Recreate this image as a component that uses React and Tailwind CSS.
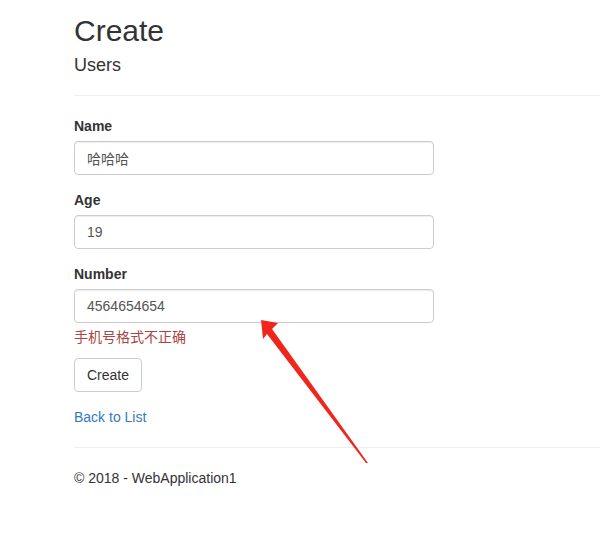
export default function App() {
  const fields = [
    { label: "Name", value: "哈哈哈" },
    { label: "Age", value: "19" },
    { label: "Number", value: "4564654654", error: "手机号格式不正确" },
  ];

  return (
    <div
      className="relative min-h-screen bg-white text-[14px] leading-[20px] text-[#333]"
      style={{ fontFamily: '"Liberation Sans", "Noto Sans CJK SC", sans-serif' }}
    >
      <div className="pl-[74px]">
        <h2 className="pt-[14px] text-[30px] leading-[33px] font-normal">Create</h2>
        <h4 className="mt-[8px] text-[18px] leading-[20px] font-normal">Users</h4>
        <hr className="mt-[20px] border-t border-[#eee]" />

        <div className="mt-[20px] w-[360px]">
          {fields.map((f) => (
            <div key={f.label} className="mb-[15px]">
              <label className="block mb-[5px] font-bold">{f.label}</label>
              <input
                readOnly
                value={f.value}
                className="block w-full h-[34px] px-[12px] py-[6px] border border-[#ccc] rounded-[4px] text-[#555] shadow-[inset_0_1px_1px_rgba(0,0,0,0.075)] outline-none"
              />
              {f.error && (
                <span className="block mt-[4px] text-[#a94442]">{f.error}</span>
              )}
            </div>
          ))}
        </div>

        <button className="-mt-[4px] h-[34px] px-[12px] border border-[#ccc] rounded-[4px] bg-white text-[#333]">
          Create
        </button>

        <div className="mt-[15px]">
          <a href="#" className="text-[#337ab7]">Back to List</a>
        </div>

        <hr className="mt-[20px] border-t border-[#eee]" />
        <footer className="mt-[20px]">© 2018 - WebApplication1</footer>
      </div>

      <svg className="absolute left-0 top-0 pointer-events-none" width="600" height="550">
        <polygon
          points="261,320 278,323 272,329 368,463 366,463 267,334 263,339"
          fill="#f0261d"
        />
      </svg>
    </div>
  );
}
